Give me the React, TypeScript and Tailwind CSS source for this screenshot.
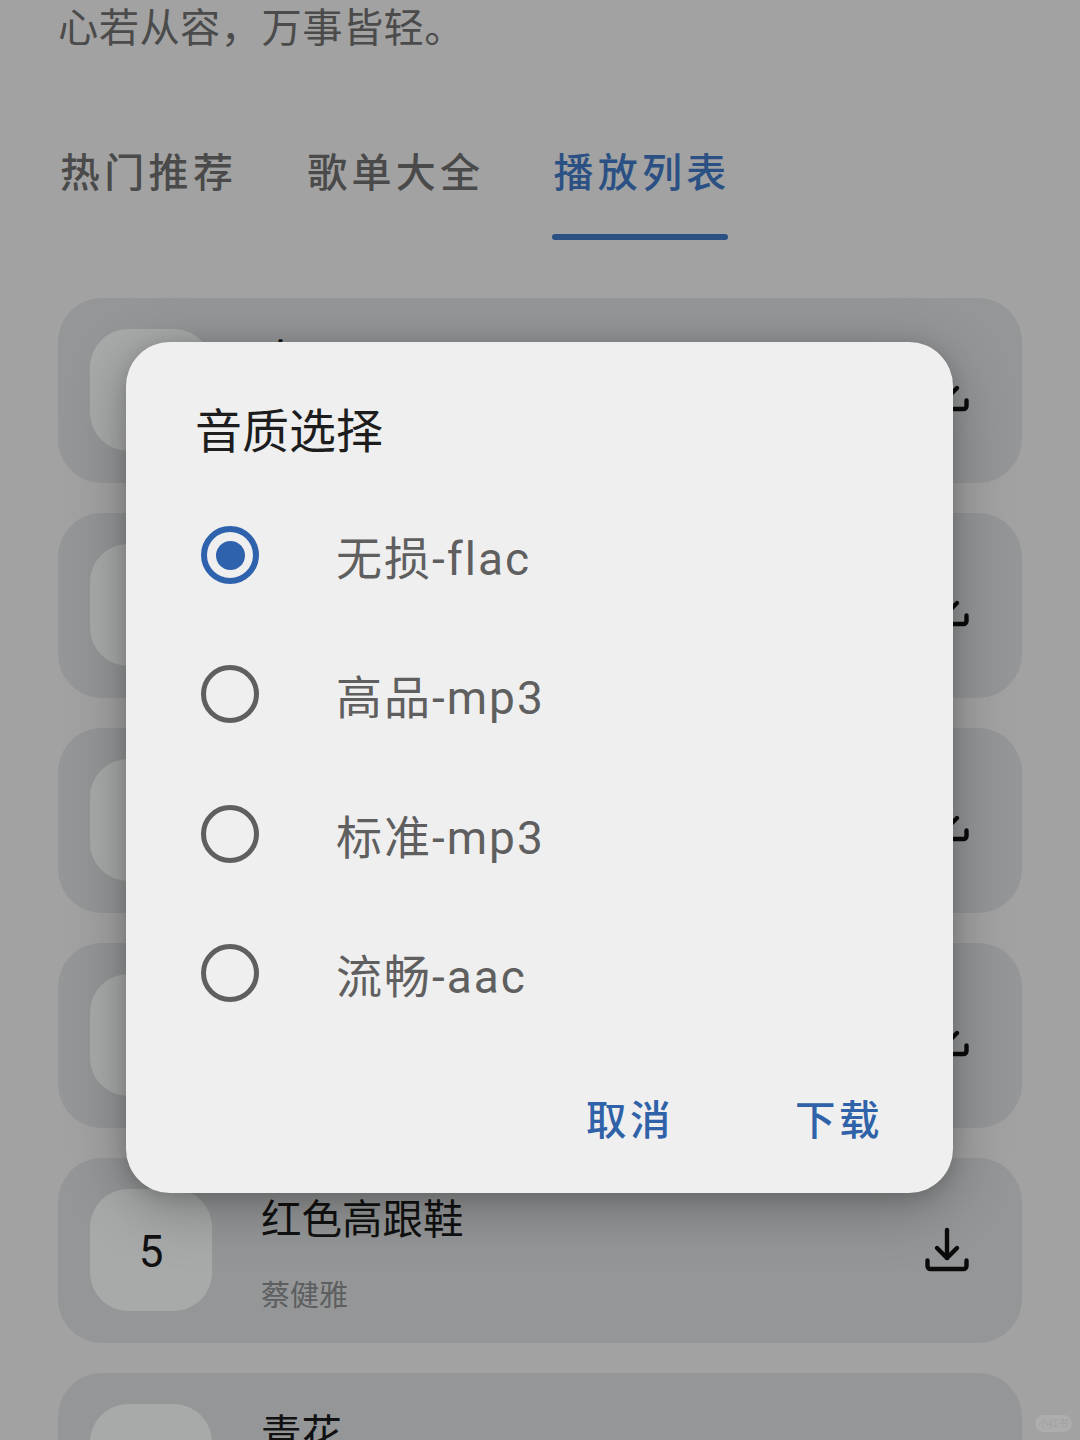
import React from 'react';

const SONGS = [
  { id: 1, title: '白云', artist: '张信哲' },
  { id: 2, title: '晴天', artist: '周杰伦' },
  { id: 3, title: '后来', artist: '刘若英' },
  { id: 4, title: '小幸运', artist: '田馥甄' },
  { id: 5, title: '红色高跟鞋', artist: '蔡健雅' },
  { id: 6, title: '青花', artist: '周传雄' },
];

const QUALITIES = ['无损-flac', '高品-mp3', '标准-mp3', '流畅-aac'];

const DownloadIcon = () => (
  <svg width="46" height="46" viewBox="0 0 46 46" fill="none" stroke="#0b0b0b" strokeWidth="4.4" strokeLinecap="round" strokeLinejoin="round">
    <path d="M23 3v28" />
    <path d="M13 21l10 10 10-10" />
    <path d="M3.500 33.500v5.500a3 3 0 0 0 3 3h33a3 3 0 0 0 3-3v-5.500" />
  </svg>
);

const SongCard = ({ id, title, artist }: { id: number; title: string; artist: string }) => (
  <div className="flex h-[185px] w-[964px] shrink-0 items-start rounded-[44px] bg-[#949697] pl-[32px] pr-[52px]">
    <div className="mt-[31px] flex h-[122px] w-[122px] shrink-0 items-center justify-center rounded-[38px] bg-[#a8a9a9] pt-[4px] text-[44px] leading-none text-[#111]">
      {id}
    </div>
    <div className="ml-[50px] flex-1 pt-[38px]">
      <div className="-ml-[1px] text-[40.500px] leading-[48px] text-[#111]">{title}</div>
      <div className="-ml-[1px] mt-[34px] text-[29px] leading-[36px] text-[#5c5e5f]">{artist}</div>
    </div>
    <div className="mt-[69px]">
      <DownloadIcon />
    </div>
  </div>
);

const Radio = ({ checked }: { checked: boolean }) => (
  <div
    className={
      checked
        ? 'flex h-[58px] w-[58px] shrink-0 items-center justify-center rounded-full border-[6px] border-[#2f62ad]'
        : 'flex h-[58px] w-[58px] shrink-0 items-center justify-center rounded-full border-[5px] border-[#5f5f5f]'
    }
  >
    {checked && <div className="h-[29px] w-[29px] rounded-full bg-[#2f62ad]" />}
  </div>
);

export default function App() {
  return (
    <div className="relative h-[1440px] w-[1080px] overflow-hidden bg-[#a2a2a2] font-['Roboto','Noto_Sans_CJK_SC',sans-serif]">
      {/* page behind the dialog */}
      <div className="flex flex-col pl-[58px]">
        <div className="pt-[1px] text-[40.300px] leading-[56px] tracking-[0.400px] text-[#4b4b4b]">心若从容，万事皆轻。</div>

        <div className="mt-[92px] flex gap-[70px] pl-[2px]">
          <div className="text-[40px] font-medium leading-[50px] tracking-[4.300px] text-[#4a4a4a]">热门推荐</div>
          <div className="text-[40px] font-medium leading-[50px] tracking-[4.300px] text-[#4a4a4a]">歌单大全</div>
          <div className="relative -ml-[3px] pl-[2px] text-[40px] font-medium leading-[50px] tracking-[4.300px] text-[#2b5084]">
            播放列表
            <div className="absolute bottom-[-41px] left-[1px] h-[6px] w-[176px] rounded-full bg-[#2b5084]" />
          </div>
        </div>

        <div className="mt-[99px] flex flex-col gap-[30px]">
          {SONGS.map(song => (
            <SongCard key={song.id} {...song} />
          ))}
        </div>
      </div>

      {/* quality dialog */}
      <div className="absolute left-[126px] top-[342px] flex h-[851px] w-[827px] flex-col rounded-[44px] bg-[#efefef] pl-[71px] pr-[70px] shadow-[0_14px_60px_rgba(0,0,0,0.28),0_4px_18px_rgba(0,0,0,0.14)]">
        <div className="-ml-[2px] mt-[61px] text-[47px] leading-[58px] text-[#1d1d1d]">音质选择</div>

        <div className="mt-[65px] flex flex-col gap-[81.300px]">
          {QUALITIES.map((q, i) => (
            <div key={q} className="flex h-[58px] items-center pl-[4px]">
              <Radio checked={i === 0} />
              <div className="ml-[77px] translate-y-[4px] text-[46px] leading-[58px] tracking-[2px] text-[#5f5f5f]">{q}</div>
            </div>
          ))}
        </div>

        <div className="mt-auto mb-[47px] flex justify-end gap-[121px]">
          <div className="text-[40.500px] font-medium leading-[50px] tracking-[3.500px] text-[#2f62a8]">取消</div>
          <div className="text-[40.500px] font-medium leading-[50px] tracking-[3.500px] text-[#2f62a8]">下载</div>
        </div>
      </div>

      {/* watermark */}
      <div className="absolute left-[1035px] top-[1415px] flex h-[17px] w-[37px] items-center justify-center rounded-full bg-[#adadad] text-[10px] leading-none text-[#a2a2a2]">
        小红书
      </div>
    </div>
  );
}
